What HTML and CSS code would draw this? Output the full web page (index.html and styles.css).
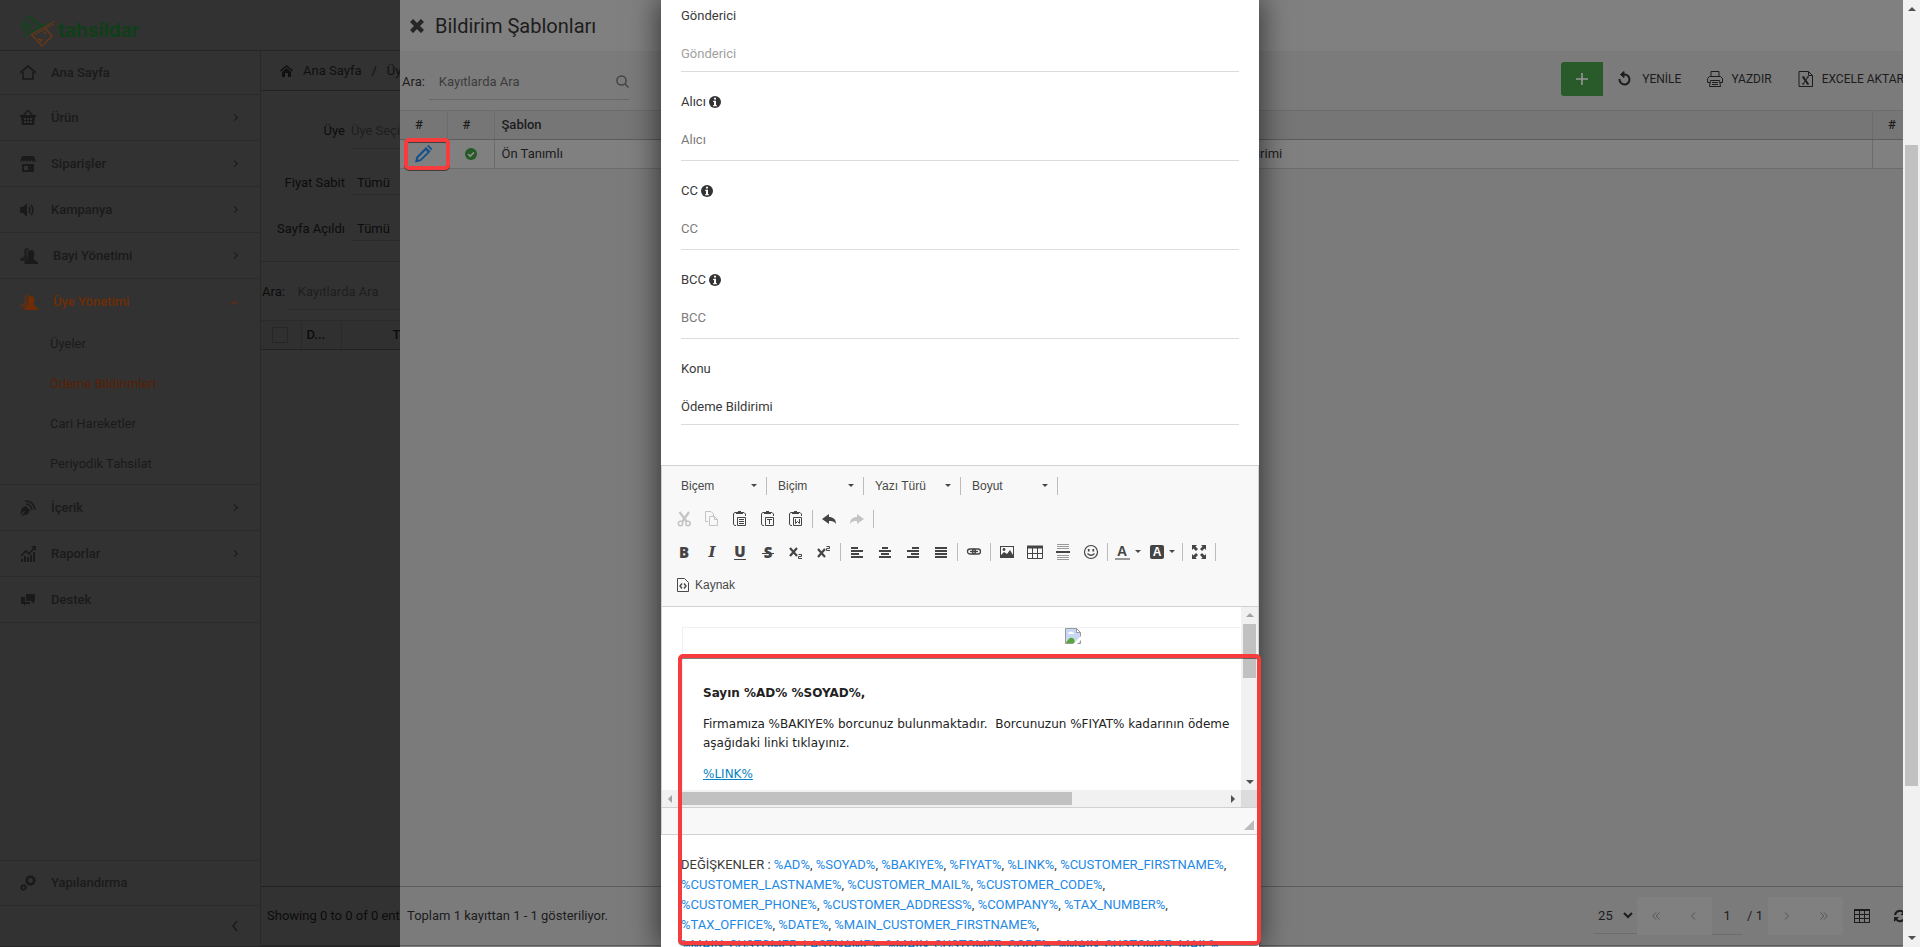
FILE: index.html
```html
<!DOCTYPE html>
<html lang="tr">
<head>
<meta charset="utf-8">
<title>Tahsildar - Bildirim Şablonları</title>
<link rel="stylesheet" href="styles.css">
</head>
<body>
<div class="screen">

<div class="app">
  <header class="topbar">
    <a class="logo" href="#">
      <svg width="36" height="34" viewBox="0 0 36 34" fill="none" aria-hidden="true">
        <g class="note-a" stroke-width="1.4"><path d="M21 15 22 13 10 2 .8 11 7 18"/><path d="M2 22 24 10M5 22 30 8" stroke-width="1"/><ellipse cx="8" cy="12" rx="2.200" ry="3" transform="rotate(35 8 12)"/><path d="M7 11l2 2M12 6l2 2M15 9l2 2"/></g>
        <g class="note-b" stroke-width="1.4"><path d="M11 20 22 32 32 22 25 14"/><path d="M12 20 35 7M14 21 34 10" stroke-width="1"/><path d="M24 20l2-2M18 25l4 1-2 2"/></g>
      </svg>
      <span>tahsildar</span>
    </a>
  </header>
  <div class="app-body">
    <nav class="sidebar">
      <a class="nav-item first" href="#"><svg width="16" height="16" viewBox="0 0 16 16"><path d="M0 8 8 1l8 7M3 7v7h10V7" fill="none" stroke="currentColor" stroke-width="1.7"/></svg><span>Ana Sayfa</span></a>
      <a class="nav-item" href="#"><svg width="16" height="16" viewBox="0 0 16 16"><path d="M3 5 7 0h2l4 5h3v2h-1l-1 8H2L1 7H0V5zM5 5h6L8.500 1.500h-1z M4 8v2h2V8zM7 8v2h2V8zM10 8v2h2V8zM4 11v2h2v-2zM7 11v2h2v-2zM10 11v2h2v-2z" fill="currentColor" fill-rule="evenodd"/></svg><span>Ürün</span><i class="chev"></i></a>
      <a class="nav-item" href="#"><svg width="16" height="16" viewBox="0 0 16 16"><path d="M2 0h12l2 6h-1l-1-2-1 2-2-2-1 2-2-2-1 2-2-2-1 2-2-2-1 2H0zM2 8h12v8H2zM4 10v4h4v-4z" fill="currentColor" fill-rule="evenodd"/></svg><span>Siparişler</span><i class="chev"></i></a>
      <a class="nav-item" href="#"><svg width="16" height="16" viewBox="0 0 16 16"><path d="M0 5h3l4-4v14l-4-4H0z" fill="currentColor"/><path d="M9 5q2 3 0 6M11 3q4 5 0 10" fill="none" stroke="currentColor" stroke-width="1.400"/></svg><span>Kampanya</span><i class="chev"></i></a>
      <a class="nav-item" href="#"><svg width="18" height="16" viewBox="0 0 18 16"><path d="M8 0C4.500-.500 3.500 3 4.500 6c.500 2-1 3-4.500 5v2h5l3-3C6 6 6.500 3 9 1z" opacity=".8" fill="currentColor"/><path d="M11 2c-3 0-4 3-3 5.500.500 2 0 3.500-3.500 6V16H18v-2c-3-1.500-5-2.500-4-6 1-3 0-6-3-6z" fill="currentColor"/></svg><span>Bayi Yönetimi</span><i class="chev"></i></a>
      <a class="nav-item active" href="#"><svg width="18" height="16" viewBox="0 0 18 16"><path d="M8 0C4.500-.500 3.500 3 4.500 6c.500 2-1 3-4.500 5v2h5l3-3C6 6 6.500 3 9 1z" opacity=".5" fill="currentColor"/><path d="M11 2c-3 0-4 3-3 5.500.500 2 0 3.500-3.500 6V16H18v-2c-3-1.500-5-2.500-4-6 1-3 0-6-3-6z" fill="currentColor"/></svg><span>Üye Yönetimi</span><i class="chev down"></i></a>
      <div class="subnav">
        <a href="#">Üyeler</a>
        <a class="current" href="#">Ödeme Bildirimleri</a>
        <a href="#">Cari Hareketler</a>
        <a href="#">Periyodik Tahsilat</a>
      </div>
      <a class="nav-item" href="#"><svg width="16" height="16" viewBox="0 0 16 16"><path d="M0 15 2 8l4-2 4 4-2 4-7 2 4-4.500-.800-.800z" fill="currentColor"/><path d="M5 1q9 0 10 9M6 4q5 0 6 6" fill="none" stroke="currentColor" stroke-width="1.600"/></svg><span>İçerik</span><i class="chev"></i></a>
      <a class="nav-item" href="#"><svg width="16" height="16" viewBox="0 0 16 16"><path d="M1 13h2v3H1zM4 10h2v6H4zM7 11h2v5H7zM10 9h2v7h-2zM13 6h2v10h-2zM11 0h5v5l-2-2z" fill="currentColor"/><path d="M1 10 6 5l3 3 5-6" fill="none" stroke="currentColor" stroke-width="1.600"/></svg><span>Raporlar</span><i class="chev"></i></a>
      <a class="nav-item" href="#"><svg width="16" height="16" viewBox="0 0 16 16"><path d="M6 2h9v7h-1v3l-3-3H6zM1 5h4v5h5v2H6l-2 2v-2H1z" fill="currentColor"/></svg><span>Destek</span></a>
      <div class="nav-bottom">
        <a class="nav-item" href="#"><svg width="16" height="16" viewBox="0 0 16 16" fill="none" stroke="currentColor"><circle cx="10.500" cy="5.500" r="3.600" stroke-width="2.400"/><circle cx="10.500" cy="5.500" r="5" stroke-dasharray="1.500 1.500"/><circle cx="3.500" cy="12.500" r="2" stroke-width="1.600"/><circle cx="3.500" cy="12.500" r="3" stroke-dasharray="1 1"/></svg><span>Yapılandırma</span></a>
        <button class="collapse" type="button" aria-label="Menüyü daralt"><svg width="6" height="12" viewBox="0 0 6 12" fill="none" stroke="currentColor" stroke-width="1.500"><path d="M5 1 1 6l4 5"/></svg></button>
      </div>
    </nav>

    <main class="page">
      <div class="crumbs">
        <svg width="13" height="12" viewBox="0 0 13 12" fill="currentColor" aria-hidden="true"><path d="M6.500 0 13 5.500l-1 1-5.500-4.700L1 6.500l-1-1zM6.500 3 11 7v5H8V8H5v4H2V7z"/></svg>
        <a href="#">Ana Sayfa</a><span>/</span><a href="#">Üye Yönetimi</a>
      </div>
      <form class="filters">
        <label for="uye">Üye</label><input id="uye" type="text" placeholder="Üye Seçiniz">
        <label for="fiyat">Fiyat Sabit</label><select id="fiyat"><option>Tümü</option></select>
        <label for="acildi">Sayfa Açıldı</label><select id="acildi"><option>Tümü</option></select>
      </form>
      <div class="page-search"><label for="ara1">Ara:</label><input id="ara1" type="text" placeholder="Kayıtlarda Ara"></div>
      <table class="page-table">
        <thead><tr><th class="c-check"><input type="checkbox" aria-label="Tümünü seç"></th><th class="c-d">D...</th><th class="c-date">Tarih</th></tr></thead>
      </table>
      <div class="page-foot">Showing 0 to 0 of 0 entries</div>
    </main>
  </div>
</div>

<section class="drawer">
  <header class="drawer-head">
    <button class="close" type="button" aria-label="Kapat"><svg width="14" height="14" viewBox="0 0 14 14" stroke="currentColor" stroke-width="4.400"><path d="M1.500 1.500l11 11M12.500 1.500l-11 11"/></svg></button>
    <h1>Bildirim Şablonları</h1>
  </header>
  <div class="drawer-tools">
    <div class="search">
      <label for="ara2">Ara:</label>
      <div class="search-box"><input id="ara2" type="text" placeholder="Kayıtlarda Ara"><svg width="13" height="13" viewBox="0 0 13 13" fill="none" stroke="currentColor" stroke-width="1.500"><circle cx="5.500" cy="5.500" r="4.600"/><path d="m9 9 3.500 3.500"/></svg></div>
    </div>
    <div class="actions">
      <button class="add" type="button" aria-label="Ekle"><svg width="14" height="14" viewBox="0 0 14 14" stroke="currentColor" stroke-width="1.600"><path d="M7 1v12M1 7h12"/></svg></button>
      <button class="act" type="button"><svg width="16" height="18" viewBox="0 0 16 18" fill="none" stroke="currentColor" stroke-width="2"><path d="M1.500 9a5 5 0 1 0 5-4.500H3"/><path d="M6 1.500 2.500 4.500 6 7.500z" fill="currentColor" stroke-width="1"/></svg>YENİLE</button>
      <button class="act" type="button"><svg width="16" height="18" viewBox="0 0 16 18" fill="none" stroke="currentColor"><path d="M4 7V1.500h8V7M3 12.500H.600v-4L2.500 6.500h11l2 2v4H13M3.500 10.500h9l1 6h-11zM5 12.500h6M5 14.500h6"/></svg>YAZDIR</button>
      <button class="act" type="button"><svg width="16" height="18" viewBox="0 0 16 18" fill="none" stroke="currentColor"><path d="M1 1.500h9.500l4 4v11H1zM10.500 1.500v4h4"/><path d="m5 7 5 7" stroke-width="2"/><path d="m10 7-5 7M4 7h2.500M8.500 7H11M4 14h2.500M8.500 14H11"/></svg>EXCELE AKTAR</button>
    </div>
  </div>
  <table class="grid">
    <colgroup><col class="w-icon"><col class="w-icon"><col class="w-name"><col><col class="w-icon"></colgroup>
    <thead><tr><th>#</th><th>#</th><th class="txt">Şablon</th><th class="txt">Konu</th><th>#</th></tr></thead>
    <tbody><tr>
      <td><button class="edit" type="button" aria-label="Düzenle"><svg width="18" height="18" viewBox="0 0 18 18"><path d="M0 17.500l1.500-6L11 2l4.500 4.500-9.500 9.500zM3.500 12.500 2.800 15l2.500-.700L12.500 7 10.800 5.200z" fill="currentColor" fill-rule="evenodd"/><path d="M12 1 13.500 0 17 3.500 16.500 5.500z" fill="currentColor"/></svg></button></td>
      <td><svg class="ok" width="12" height="12" viewBox="0 0 12 12"><circle cx="6" cy="6" r="6" fill="#235a25"/><path d="m3 6 2.200 2.200L9 4.300" fill="none" stroke="#8a8a8a" stroke-width="1.700"/></svg></td>
      <td class="txt">Ön Tanımlı</td><td class="txt">Ödeme Bildirimi</td><td></td>
    </tr></tbody>
  </table>
  <footer class="drawer-foot">
    <p>Toplam 1 kayıttan 1 - 1 gösteriliyor.</p>
    <div class="pager">
      <div class="size"><select aria-label="Sayfa boyutu"><option>25</option></select><svg width="10" height="7" viewBox="0 0 10 7" fill="none" stroke="currentColor" stroke-width="2"><path d="m1 1 4 4 4-4"/></svg></div>
      <div class="pair"><button type="button" aria-label="İlk"><svg width="8" height="8" viewBox="0 0 8 8"><path d="M4 .500.700 4 4 7.500M7.500.500 4.200 4l3.300 3.500"/></svg></button><button type="button" aria-label="Önceki"><svg width="8" height="8" viewBox="0 0 8 8"><path d="M6 .500 2.500 4 6 7.500"/></svg></button></div>
      <input class="pno" type="text" value="1" aria-label="Sayfa">
      <span class="total">/ 1</span>
      <div class="pair"><button type="button" aria-label="Sonraki"><svg width="8" height="8" viewBox="0 0 8 8"><path d="M2 .500 5.500 4 2 7.500"/></svg></button><button type="button" aria-label="Son"><svg width="8" height="8" viewBox="0 0 8 8"><path d="M.500.500 3.800 4 .500 7.500M4 .500 7.300 4 4 7.500"/></svg></button></div>
      <button class="ico" type="button" aria-label="Sütunlar"><svg width="16" height="14" viewBox="0 0 16 14" fill="none" stroke="currentColor"><path d="M0 1h16" stroke-width="2"/><path d="M.500 0v14M5.500 0v14M10.500 0v14M15.500 0v14M0 5.500h16M0 9.500h16M0 13.500h16"/></svg></button>
      <button class="ico" type="button" aria-label="Tazele"><svg width="16" height="14" viewBox="0 0 16 14" fill="none" stroke="currentColor" stroke-width="2"><path d="M2 6a5 5 0 0 1 9-2M12 8a5 5 0 0 1-9 2"/><path d="M12.500 1v5h-5zM1 13V8h5z" fill="currentColor" stroke="none"/></svg></button>
    </div>
  </footer>
  <div class="mark mark-edit"></div>
</section>

<div class="modal-layer">
<section class="modal" role="dialog" aria-label="Şablon düzenle">
  <form class="fields">
    <label for="f1">Gönderici</label><input class="light" id="f1" type="text" placeholder="Gönderici">
    <label for="f2">Alıcı <svg class="info" width="12" height="12" viewBox="0 0 12 12"><circle cx="6" cy="6" r="6" fill="#333"/><path d="M5 1.700h2v1.700H5zM4.200 4.700H7V9h.800v1.200H4.200V9H5V5.900h-.800z" fill="#fff"/></svg></label><textarea id="f2" rows="1" placeholder="Alıcı"></textarea>
    <label for="f3">CC <svg class="info" width="12" height="12" viewBox="0 0 12 12"><circle cx="6" cy="6" r="6" fill="#333"/><path d="M5 1.700h2v1.700H5zM4.200 4.700H7V9h.800v1.200H4.200V9H5V5.900h-.800z" fill="#fff"/></svg></label><textarea id="f3" rows="1" placeholder="CC"></textarea>
    <label for="f4">BCC <svg class="info" width="12" height="12" viewBox="0 0 12 12"><circle cx="6" cy="6" r="6" fill="#333"/><path d="M5 1.700h2v1.700H5zM4.200 4.700H7V9h.800v1.200H4.200V9H5V5.900h-.800z" fill="#fff"/></svg></label><textarea id="f4" rows="1" placeholder="BCC"></textarea>
    <label for="f5">Konu</label><input id="f5" type="text" value="Ödeme Bildirimi">
  </form>

  <div class="editor">
    <div class="toolbar">
      <div class="trow">
        <button class="combo" type="button">Biçem<i class="caret"></i></button><i class="sep"></i>
        <button class="combo" type="button">Biçim<i class="caret"></i></button><i class="sep"></i>
        <button class="combo" type="button">Yazı Türü<i class="caret"></i></button><i class="sep"></i>
        <button class="combo" type="button">Boyut<i class="caret"></i></button><i class="sep"></i>
      </div>
      <div class="trow">
        <button class="tb off" type="button" aria-label="Kes"><svg width="16" height="16" viewBox="0 0 16 16" fill="none" stroke="currentColor"><path d="M3.500 1 11 11M13 1 6 11" stroke-width="2.200"/><circle cx="4.500" cy="12.500" r="2.200" stroke-width="1.500"/><circle cx="12" cy="12.500" r="2.200" stroke-width="1.500"/></svg></button>
        <button class="tb off" type="button" aria-label="Kopyala"><svg width="16" height="16" viewBox="0 0 16 16" fill="none" stroke="currentColor"><path d="M4 10.500H1.500v-10H7L9.500 3v2M5.500 5.500h5l3 3v6h-8zM10.500 5.500v3h3"/></svg></button>
        <button class="tb" type="button" aria-label="Yapıştır"><svg width="16" height="16" viewBox="0 0 16 16" fill="none" stroke="currentColor"><path d="M4 14.500H2.500L1.500 13V3l1-1.500H4M11 1.500h1L13.500 3v2M5.500 6.500h8v8h-8zM7 8.500h5M7 10.500h5M7 12.500h5"/><path d="M4 1h2V0h3v1h2v2H4z" fill="currentColor" stroke="none"/></svg></button>
        <button class="tb" type="button" aria-label="Düz metin yapıştır"><svg width="16" height="16" viewBox="0 0 16 16" fill="none" stroke="currentColor"><path d="M4 14.500H2.500L1.500 13V3l1-1.500H4M11 1.500h1L13.500 3v2M5.500 6.500h8v8h-8zM7 8.500h5M9.500 8.500V13"/><path d="M4 1h2V0h3v1h2v2H4z" fill="currentColor" stroke="none"/></svg></button>
        <button class="tb" type="button" aria-label="Word'den yapıştır"><svg width="16" height="16" viewBox="0 0 16 16" fill="none" stroke="currentColor"><path d="M4 14.500H2.500L1.500 13V3l1-1.500H4M11 1.500h1L13.500 3v2M5.500 6.500h8v8h-8zM7.500 8v4.500L9.500 10.500l2 2V8"/><path d="M4 1h2V0h3v1h2v2H4z" fill="currentColor" stroke="none"/></svg></button><i class="sep"></i>
        <button class="tb" type="button" aria-label="Geri al"><svg width="16" height="16" viewBox="0 0 16 16" fill="currentColor"><path d="M1 8 8 3v3c4 0 7 2 7 7-2-3-4-3-7-3v3z"/></svg></button>
        <button class="tb off" type="button" aria-label="Yinele"><svg width="16" height="16" viewBox="0 0 16 16" fill="currentColor"><path d="M15 8 8 3v3c-4 0-7 2-7 7 2-3 4-3 7-3v3z"/></svg></button><i class="sep"></i>
      </div>
      <div class="trow">
        <button class="tb glyph" type="button"><b>B</b></button>
        <button class="tb glyph it" type="button"><b>I</b></button>
        <button class="tb glyph" type="button"><b class="un">U</b></button>
        <button class="tb glyph" type="button"><b class="st">S</b></button>
        <button class="tb" type="button" aria-label="Alt simge"><svg width="16" height="16" viewBox="0 0 16 16" fill="none" stroke="currentColor"><path d="m2 4 7 8M9 4l-7 8" stroke-width="2.200"/><path d="M10.500 10.500h3v2h-3v2h3.500" /></svg></button>
        <button class="tb" type="button" aria-label="Üst simge"><svg width="16" height="16" viewBox="0 0 16 16" fill="none" stroke="currentColor"><path d="m2 5 7 8M9 5l-7 8" stroke-width="2.200"/><path d="M10.500 2.500h3v2h-3v2h3.500"/></svg></button><i class="sep"></i>
        <button class="tb" type="button" aria-label="Sola hizala"><svg width="16" height="16" viewBox="0 0 16 16" stroke="currentColor" stroke-width="2"><path d="M2 4h7M2 7h12M2 10h8M2 13h12" /></svg></button>
        <button class="tb" type="button" aria-label="Ortala"><svg width="16" height="16" viewBox="0 0 16 16" stroke="currentColor" stroke-width="2"><path d="M5 4h6M2 7h12M4 10h8M2 13h12"/></svg></button>
        <button class="tb" type="button" aria-label="Sağa hizala"><svg width="16" height="16" viewBox="0 0 16 16" stroke="currentColor" stroke-width="2"><path d="M7 4h7M2 7h12M6 10h8M2 13h12"/></svg></button>
        <button class="tb" type="button" aria-label="İki yana yasla"><svg width="16" height="16" viewBox="0 0 16 16" stroke="currentColor" stroke-width="2"><path d="M2 4h12M2 7h12M2 10h12M2 13h12"/></svg></button><i class="sep"></i>
        <button class="tb" type="button" aria-label="Bağlantı"><svg width="16" height="16" viewBox="0 0 16 16" fill="none" stroke="currentColor" stroke-width="1.300"><rect x="1.500" y="5" width="8" height="5" rx="2.500"/><rect x="6.500" y="5" width="8" height="5" rx="2.500"/><path d="M4 7.500h8"/></svg></button><i class="sep"></i>
        <button class="tb" type="button" aria-label="Resim"><svg width="16" height="16" viewBox="0 0 16 16" fill="none" stroke="currentColor"><rect x="1.500" y="2.500" width="13" height="11"/><path d="M2 13v-2l3-3 3 2 3-4 3 5v2z" fill="currentColor" stroke="none"/><circle cx="5" cy="5.500" r="1.400" fill="currentColor" stroke="none"/></svg></button>
        <button class="tb" type="button" aria-label="Tablo"><svg width="16" height="16" viewBox="0 0 16 16" fill="none" stroke="currentColor"><path d="M0 3h16" stroke-width="3"/><path d="M.500 2v12.500h15V2M5.500 4v10M10.500 4v10M0 9.500h16"/></svg></button>
        <button class="tb" type="button" aria-label="Yatay çizgi"><svg width="16" height="16" viewBox="0 0 16 16" stroke="#999"><path d="M2 .500h12M2 2.500h12M2 4.500h12M2 11.500h12M2 13.500h12M2 15.500h12"/><path d="M1 8h14" stroke="currentColor" stroke-width="2"/></svg></button>
        <button class="tb" type="button" aria-label="İfade"><svg width="16" height="16" viewBox="0 0 16 16" fill="none" stroke="currentColor" stroke-width="1.200"><circle cx="8" cy="8" r="6.500"/><path d="M4.500 9.500q3.500 3.500 7 0"/><path d="M5.700 5v2.400M10.300 5v2.400" stroke-width="1.700"/></svg></button><i class="sep"></i>
        <button class="tb wide" type="button"><b class="fg">A</b><i class="caret"></i></button>
        <button class="tb wide" type="button"><b class="bg">A</b><i class="caret"></i></button><i class="sep"></i>
        <button class="tb" type="button" aria-label="Büyüt"><svg width="16" height="16" viewBox="0 0 16 16" fill="currentColor"><path d="M1 1h5L4.500 2.500 7 5 5 7 2.500 4.500 1 6zM15 1v5l-1.500-1.500L11 7 9 5l2.500-2.500L10 1zM1 15v-5l1.500 1.500L5 9l2 2-2.500 2.500L6 15zM15 15h-5l1.500-1.500L9 11l2-2 2.500 2.500L15 10z"/></svg></button><i class="sep"></i>
      </div>
      <div class="trow">
        <button class="source" type="button"><svg width="12" height="14" viewBox="0 0 12 14" fill="none" stroke="currentColor"><path d="M.500.500h7l4 4v9H.500z"/><path d="M5 5.500 3 8l2 2.500M7 5.500 9 8l-2 2.500" stroke-width="1.400"/></svg>Kaynak</button>
      </div>
    </div>
    <div class="frame">
      <div class="doc">
        <div class="sheet">
          <svg class="broken" width="16" height="16" viewBox="0 0 16 16" role="img" aria-label="Resim"><path d="M.500.500h11l4 4v11H.500z" fill="#c8d8f4" stroke="#999"/><path d="M11.500.500v4h4z" fill="#fff" stroke="#999"/><path d="M3 6q0-2 2-2 1-1 2.500 0Q9 4 9 6z" fill="#fff"/><path d="M1 15q4-8 8-4l1 4z" fill="#57a639"/><path d="m8 16 8-8v4l-4 4z" fill="#fff"/></svg>
          <div class="letter">
            <p><b>Sayın %AD% %SOYAD%,</b></p>
            <p>Firmamıza %BAKIYE% borcunuz bulunmaktadır.&nbsp; Borcunuzun %FIYAT% kadarının ödeme<br>aşağıdaki linki tıklayınız.</p>
            <p><a href="#">%LINK%</a></p>
          </div>
        </div>
      </div>
      <div class="vbar"><i class="tri up dim"></i><i class="vthumb"></i><i class="tri dn"></i></div>
      <div class="hbar"><i class="tri lf dim"></i><i class="hthumb"></i><i class="tri rt"></i></div>
      <div class="corner"></div>
    </div>
    <div class="status"><i class="grip"></i></div>
  </div>

  <p class="vars">DEĞİŞKENLER : <a href="#">%AD%</a>, <a href="#">%SOYAD%</a>, <a href="#">%BAKIYE%</a>, <a href="#">%FIYAT%</a>, <a href="#">%LINK%</a>, <a href="#">%CUSTOMER_FIRSTNAME%</a>, <a href="#">%CUSTOMER_LASTNAME%</a>, <a href="#">%CUSTOMER_MAIL%</a>, <a href="#">%CUSTOMER_CODE%</a>, <a href="#">%CUSTOMER_PHONE%</a>, <a href="#">%CUSTOMER_ADDRESS%</a>, <a href="#">%COMPANY%</a>, <a href="#">%TAX_NUMBER%</a>, <a href="#">%TAX_OFFICE%</a>, <a href="#">%DATE%</a>, <a href="#">%MAIN_CUSTOMER_FIRSTNAME%</a>, <a href="#">%MAIN_CUSTOMER_LASTNAME%</a>, <a href="#">%MAIN_CUSTOMER_CODE%</a>, <a href="#">%MAIN_CUSTOMER_MAIL%</a>,</p>
</section>
<div class="mark mark-body"></div>
</div>

<div class="pagebar"><i class="tri up"></i><div class="track"><i class="thumb"></i></div><i class="tri dn"></i></div>
</div>
</body>
</html>
```
FILE: styles.css
```css
* { box-sizing: border-box; }
body { margin: 0; font: 13px/20px Roboto, "Open Sans", sans-serif; }
a { color: inherit; text-decoration: none; }
button, input, select, textarea {
  font: inherit; color: inherit; background: none; border: 0; margin: 0; padding: 0;
  border-radius: 0; appearance: none; outline: 0; resize: none;
}
button { display: inline-flex; align-items: center; justify-content: center; }
svg { display: block; flex: none; }
p, h1 { margin: 0; }
i { display: block; flex: none; }

.screen { position: relative; height: 100vh; overflow: hidden; }

/* dimmed application page */
.app { display: flex; flex-direction: column; height: 100%; background: #323232; color: #0c0c0c; border-bottom: 1px solid #262626; }
.topbar { height: 51px; border-bottom: 1px solid #262626; padding: 14px 20px 0; }
.logo { display: inline-flex; align-items: center; gap: 2px; height: 34px; color: #0f3f19; font: bold 19px/24px Inter, sans-serif; }
.note-a { stroke: #12451d; }
.note-b { stroke: #6b3814; }
.app-body { flex: 1; display: flex; min-height: 0; }
.sidebar { width: 261px; flex: none; display: flex; flex-direction: column; color: #1a1a1a; font-weight: 500; border-right: 1px solid #292929; }
.nav-item { display: flex; align-items: center; gap: 15px; height: 46px; padding: 0 20px; border-bottom: 1px solid #2b2b2b; }
.nav-item.first { height: 44px; }
.nav-item.active { height: 45px; border: 0; color: #702d05; }
.chev { width: 5px; height: 5px; margin: 0 3px 0 auto; border: solid currentColor; border-width: 1px 1px 0 0; transform: rotate(45deg); }
.chev.down { transform: rotate(135deg); }
.subnav { display: flex; flex-direction: column; border-bottom: 1px solid #2b2b2b; font-weight: 400; }
.subnav a { line-height: 40px; padding-left: 50px; }
.subnav .current { color: #581f04; }
.nav-bottom { margin-top: auto; }
.nav-bottom .nav-item { border-top: 1px solid #2b2b2b; }
.collapse { display: flex; margin-left: auto; width: 50px; height: 40px; }

.page { flex: 1; display: flex; flex-direction: column; min-width: 0; }
.crumbs { display: flex; align-items: center; gap: 10px; height: 40px; padding: 0 19px; border-bottom: 1px solid #222; color: #101010; }
.filters { display: grid; grid-template-columns: 84px 1fr; column-gap: 6px; row-gap: 22px; padding: 21px 0 20px; border-bottom: 1px solid #292929; align-items: center; }
.filters label { text-align: right; }
.filters input { height: 37px; border-bottom: 1px solid #2a2a2a; }
.filters select { height: 24px; padding-left: 6px; border-bottom: 1px solid #2a2a2a; }
.page ::placeholder { color: #1e1e1e; opacity: 1; }
.page-search { display: flex; align-items: center; gap: 3px; padding: 12px 0 10px 1px; }
.page-search input { flex: 1; height: 36px; padding-left: 10px; border-bottom: 1px solid #2a2a2a; }
.page-table { width: 100%; border-collapse: collapse; table-layout: fixed; }
.page-table th { height: 29px; padding: 0 5px; font-weight: 500; text-align: left; border-top: 1px solid #2a2a2a; border-bottom: 1px solid #222; border-right: 1px solid #2a2a2a; background: #303030; }
.page-table .c-check { width: 40px; padding: 0 0 0 11px; }
.page-table .c-d { width: 40px; }
.page-table .c-date { padding-left: 51px; }
.page-table input { display: block; width: 16px; height: 16px; border: 1px solid #262626; }
.page-foot { margin-top: auto; height: 60px; border-top: 1px solid #222; border-bottom: 1px solid #262626; padding: 0 6px; line-height: 58px; }

/* drawer */
.drawer { position: absolute; top: 0; right: 0; bottom: 0; left: 400px; display: flex; flex-direction: column; background: #7b7b7b; color: #1c1c1c; }
.drawer-head { display: flex; align-items: center; gap: 11px; height: 51px; padding: 0 10px; background: #808080; }
.drawer-head h1 { font-size: 20px; line-height: 24px; font-weight: 400; }
.close { color: #262626; }
.drawer-tools { display: flex; justify-content: space-between; height: 59px; padding: 11px 0 10px; }
.search { display: flex; align-items: center; align-self: flex-end; gap: 4px; padding-left: 2px; }
.search-box { display: flex; align-items: center; width: 200px; height: 36px; border-bottom: 1px solid #686868; color: #454545; }
.search-box input { flex: 1; min-width: 0; padding-left: 10px; }
.search-box ::placeholder { color: #3b3b3b; opacity: 1; }
.actions { display: flex; height: 34px; padding-right: 3px; font-size: 12px; }
.add { width: 42px; margin-right: 2px; border-radius: 3px 0 0 3px; background: #295b2a; color: #969696; }
.act { gap: 8px; padding: 0 13px; }
.grid { width: 100%; border-collapse: collapse; table-layout: fixed; background: #808080; }
.w-icon { width: 47px; }
.w-name { width: 689px; }
.grid th, .grid td { height: 29px; padding: 0 6px 0 15px; text-align: left; font-weight: 400; border: 1px solid #6c6c6c; border-left: 0; }
.grid th { background: #767676; border-bottom-color: #5c5c5c; font-weight: 500; }
.grid .txt { padding-left: 7px; }
.edit { color: #12508c; display: flex; }
.ok { margin-left: 2px; }
.drawer-foot { display: flex; align-items: center; justify-content: space-between; height: 60px; margin-top: auto; margin-bottom: 1px; padding: 0 11px 0 7px; border-top: 1px solid #5c5c5c; border-bottom: 1px solid #5c5c5c; }
.pager { display: flex; align-items: center; }
.size { display: flex; align-items: center; width: 43px; height: 36px; padding: 0 4px; border-bottom: 1px solid #6c6c6c; }
.size select { flex: 1; min-width: 0; }
.pair { display: flex; width: 75px; height: 38px; background: #808080; color: #555; }
.pair button { flex: 1; }
.pair svg { fill: none; stroke: currentColor; }
.pno { width: 30px; height: 38px; text-align: center; border-bottom: 1px solid #6c6c6c; }
.total { padding: 0 5px; }
.ico { margin-left: 23px; }
.pair + .ico { margin-left: 11px; }

/* modal */
.modal-layer { position: absolute; inset: 0; display: flex; justify-content: center; }
.modal { width: 598px; background: #fff; color: #3a3a3a; box-shadow: 0 0 28px 2px rgba(0, 0, 0, .6); overflow: hidden; }
.fields { display: flex; flex-direction: column; padding: 6px 20px 0; }
.fields label { display: flex; align-items: center; gap: 3px; height: 20px; margin-bottom: 9px; }
.fields input { height: 37px; border-bottom: 1px solid #dcdcdc; margin-bottom: 20px; }
.fields textarea { display: block; height: 40px; padding: 9px 0; border-bottom: 1px solid #dcdcdc; margin-bottom: 20px; overflow: hidden; }
.fields ::placeholder { color: #7b7b7b; opacity: 1; }
.fields .light::placeholder { color: #a0a0a0; }

.editor { margin-top: 20px; border: 1px solid #d1d1d1; font: 12px/18px "Liberation Sans", Arial, sans-serif; color: #484848; }
.toolbar { padding: 3px 8px 5px; background: #f8f8f8; border-bottom: 1px solid #d1d1d1; }
.trow { display: flex; align-items: center; height: 33px; }
.sep { width: 1px; height: 18px; margin: 0 2px; background: #bcbcbc; }
.combo { width: 92px; justify-content: space-between; padding: 0 5px 0 11px; }
.combo + .sep { margin: 0 0 0 4px; }
.caret { width: 0; height: 0; border: 3px solid transparent; border-top-color: #484848; border-bottom: 0; }
.tb { width: 28px; height: 26px; color: #444; }
.tb.off { color: #c4c4c4; }
.tb.wide { width: 35px; gap: 5px; }
.glyph { font: bold 15px/16px "Noto Sans", sans-serif; }
.it { font: italic bold 15px/16px "DejaVu Serif", serif; }
.un { border-bottom: 1px solid #444; height: 16px; line-height: 14px; }
.st { padding: 0 2px; background: linear-gradient(#444, #444) 0 9px / 100% 1px no-repeat; }
.fg { width: 15px; height: 16px; font: bold 14px/14px "Liberation Sans", sans-serif; border-bottom: 2px solid #999; }
.bg { width: 14px; height: 14px; font: bold 12px/14px "Liberation Sans", sans-serif; background: #444; color: #fff; border-radius: 2px; }
.source { gap: 6px; padding-left: 7px; }

.frame { display: grid; grid-template-columns: minmax(0, 1fr) 17px; grid-template-rows: 183px 17px; background: #fff; }
.doc { overflow: hidden; padding: 20px 0 0 20px; }
.sheet { width: 770px; height: 400px; border: 1px solid #f0f0f0; font: 12px/19px "DejaVu Sans", Verdana, sans-serif; color: #222; }
.broken { margin-left: 382px; }
.letter { padding: 40px 20px 0; }
.letter p { margin-bottom: 12px; white-space: nowrap; }
.letter a { color: #0782c1; text-decoration: underline; }
.vbar, .hbar { display: flex; align-items: center; background: #f1f1f1; }
.vbar { flex-direction: column; padding: 6px 0; }
.vthumb { width: 13px; height: 54px; margin: 7px 0 auto; background: #c1c1c1; }
.hbar { padding: 0 6px; }
.hthumb { width: 394px; height: 13px; margin: 0 auto 0 6px; background: #c1c1c1; }
.corner { background: #dcdcdc; }
.tri { width: 0; height: 0; border: 4px solid transparent; }
.up { border-top: 0; border-bottom-color: #505050; }
.dn { border-bottom: 0; border-top-color: #505050; }
.lf { border-left: 0; border-right-color: #505050; }
.rt { border-right: 0; border-left-color: #505050; }
.up.dim { border-bottom-color: #a3a3a3; }
.lf.dim { border-right-color: #a3a3a3; }
.status { display: flex; justify-content: flex-end; align-items: flex-end; height: 27px; padding: 4px; background: #f8f8f8; border-top: 1px solid #d1d1d1; }
.grip { width: 0; height: 0; border: 5px solid #bcbcbc; border-top-color: transparent; border-left-color: transparent; }
.vars { padding: 20px; }
.vars a { color: #1e88e5; }

/* highlight boxes */
.mark { position: absolute; border: 4px solid #f63c3c; border-radius: 5px; pointer-events: none; filter: drop-shadow(0 1px 0 rgba(0, 0, 0, .5)); }
.mark-edit { left: 4px; top: 138px; width: 46px; height: 32px; }
.mark-body { left: calc(50% - 282px); top: 654px; bottom: 2px; width: 583px; }

/* window scroll bar */
.pagebar { position: absolute; top: 0; right: 0; bottom: 0; width: 17px; display: flex; flex-direction: column; align-items: center; padding: 7px 0; background: #f1f1f1; }
.track { flex: 1; width: 13px; padding-top: 134px; }
.thumb { height: 81%; background: #c1c1c1; }
```
